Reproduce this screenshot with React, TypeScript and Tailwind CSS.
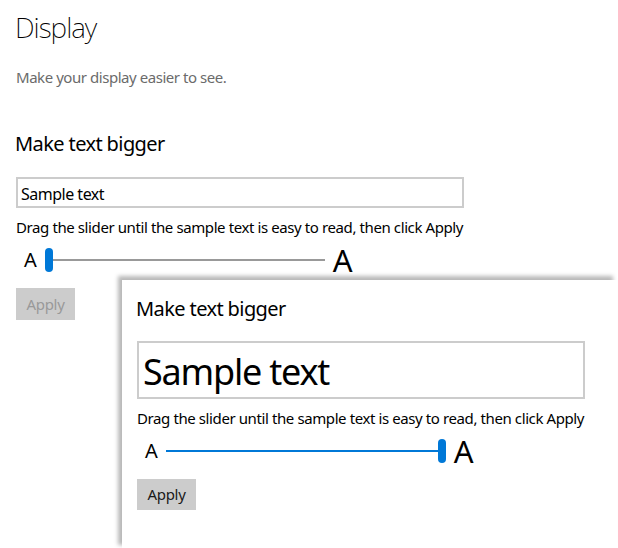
import React from "react";

function Slider({ value, active }: { value: "min" | "max"; active?: boolean }) {
  const thumb = <div className="w-[8px] h-[24px] rounded-full bg-[#0078d7] shrink-0" />;
  return (
    <div className="flex items-center h-[24px]">
      <span className="ml-[8px] text-[20px] leading-[24px] text-black">A</span>
      <div className="ml-[8px] w-[280px] h-[24px] flex items-center">
        {value === "min" && thumb}
        <div className={"flex-1 h-[2px] " + (active ? "bg-[#0078d7]" : "bg-[#999999]")} />
        {value === "max" && thumb}
      </div>
      <span className="ml-[8px] text-[31px] leading-[24px] text-black">A</span>
    </div>
  );
}

export default function App() {
  return (
    <div
      className="relative w-[618px] h-[548px] bg-white overflow-hidden text-black"
      style={{ fontFamily: '"Noto Sans", "Open Sans", sans-serif' }}
    >
      <div className="pl-[16px] pt-[9px]">
        <h1 className="ml-[-1px] text-[28px] font-extralight leading-[36px] tracking-[-1px]">Display</h1>
        <p className="mt-[22px] text-[15px] leading-[20px] tracking-[-0.45px] text-[#6b6b6b]">
          Make your display easier to see.
        </p>
        <h2 className="mt-[43px] ml-[-1px] text-[20px] leading-[28px] tracking-[-0.6px]">Make text bigger</h2>
        <div className="mt-[19px] w-[448px] h-[31px] border-2 border-[#cccccc] pl-[3px] text-[16px] leading-[31px] tracking-[-0.5px]">
          Sample text
        </div>
        <p className="mt-[9px] text-[15px] leading-[20px] tracking-[-0.4px]">
          Drag the slider until the sample text is easy to read, then click Apply
        </p>
        <div className="mt-[11px]">
          <Slider value="min" />
        </div>
        <button className="mt-[16px] w-[59px] h-[32px] bg-[#cccccc] text-[15px] tracking-[-0.3px] text-[#999999] flex items-center justify-center">
          Apply
        </button>
      </div>

      <div className="absolute left-[122px] top-[280px] w-[495px] h-[269px] bg-white shadow-[-4px_-4px_4px_0px_rgba(0,0,0,0.28)] pl-[15px] pt-[15px]">
        <h2 className="ml-[-1px] text-[20px] leading-[28px] tracking-[-0.6px]">Make text bigger</h2>
        <div className="mt-[18px] w-[448px] h-[58px] border-2 border-[#cccccc] pl-[4px] text-[36px] leading-[58px] tracking-[-1.2px]">
          Sample text
        </div>
        <p className="mt-[9px] text-[15px] leading-[20px] tracking-[-0.4px]">
          Drag the slider until the sample text is easy to read, then click Apply
        </p>
        <div className="mt-[11px]">
          <Slider value="max" active />
        </div>
        <button className="mt-[16px] w-[59px] h-[31px] bg-[#cccccc] text-[15px] tracking-[-0.3px] text-[#1a1a1a] flex items-center justify-center">
          Apply
        </button>
      </div>
    </div>
  );
}
